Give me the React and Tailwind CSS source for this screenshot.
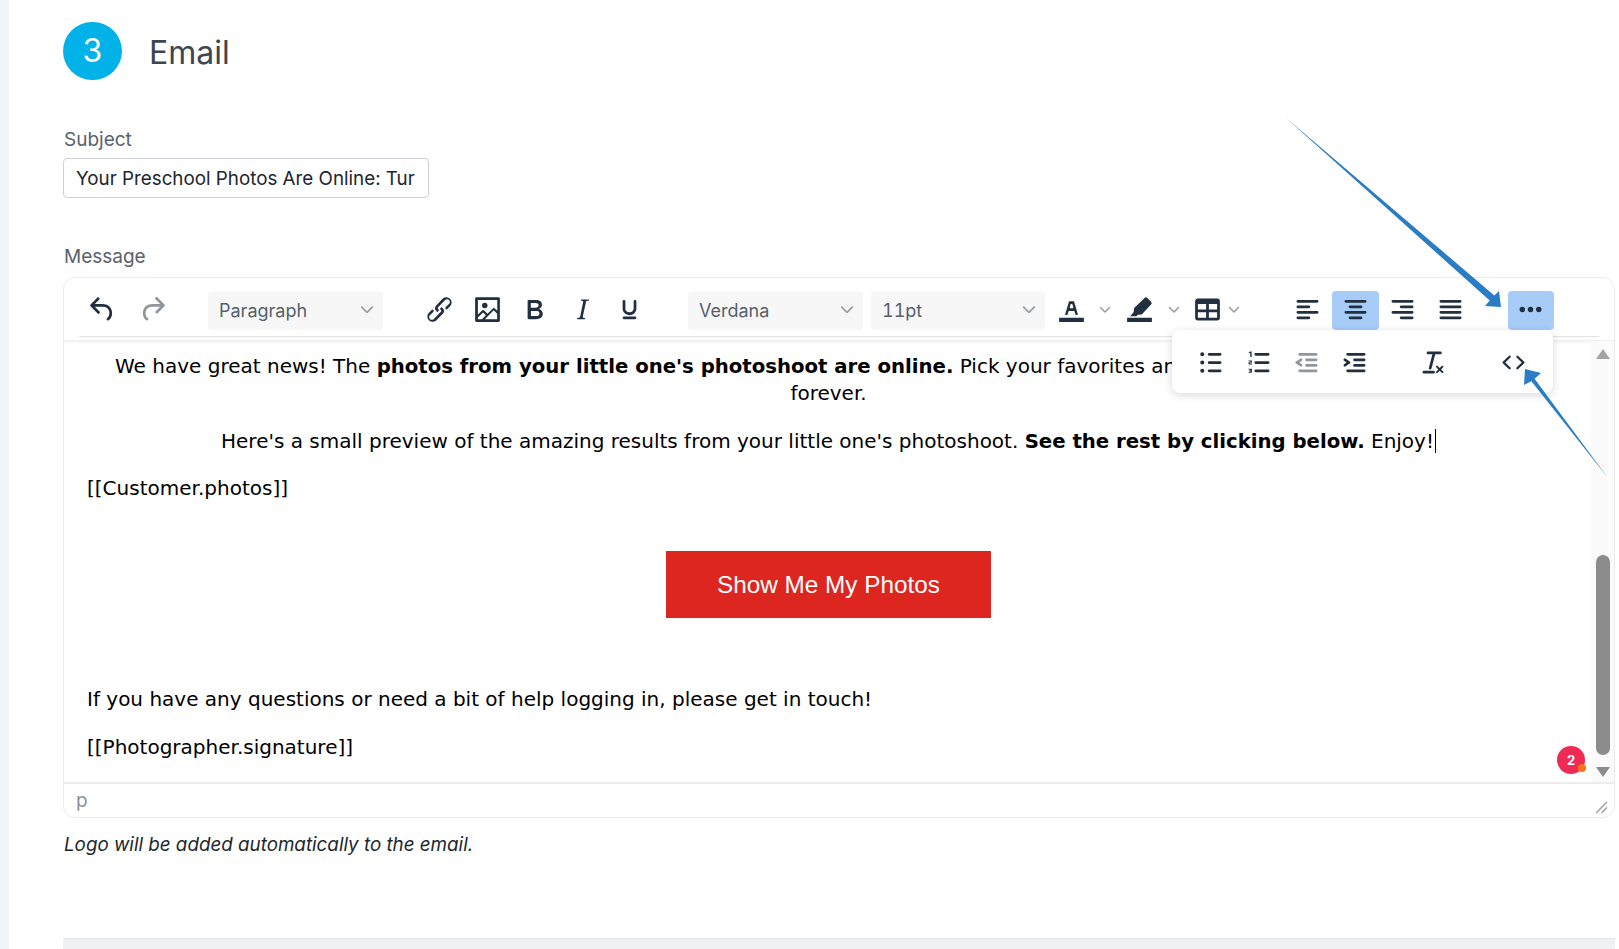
const ink = '#222f3e'

const icons = {
  undo: 'M6.4 8H12c3.7 0 6.2 2 6.8 5.1.6 2.7-.4 5.6-2.3 6.8a1 1 0 0 1-1-1.8c1.1-.6 1.8-2.7 1.4-4.6-.5-2.1-2.1-3.5-4.9-3.5H6.4l3.3 3.3a1 1 0 1 1-1.4 1.4l-5-5a1 1 0 0 1 0-1.4l5-5a1 1 0 0 1 1.4 1.4L6.4 8Z',
  redo: 'M17.6 10H12c-2.8 0-4.4 1.4-4.9 3.5-.4 2 .3 4 1.4 4.6a1 1 0 1 1-1 1.8c-2-1.2-2.9-4.1-2.3-6.8.6-3 3-5.1 6.8-5.1h5.6l-3.3-3.3a1 1 0 1 1 1.4-1.4l5 5a1 1 0 0 1 0 1.4l-5 5a1 1 0 0 1-1.4-1.4l3.3-3.3Z',
  link: 'M6.2 12.3a1 1 0 0 1 1.4 1.4l-2 2a2 2 0 1 0 2.6 2.8l4.8-4.8a1 1 0 0 0 0-1.4 1 1 0 1 1 1.4-1.3 2.9 2.9 0 0 1 0 4L9.6 20a3.9 3.9 0 0 1-5.5-5.5l2-2Zm11.6-.6a1 1 0 0 1-1.4-1.4l2-2a2 2 0 1 0-2.6-2.8L11 10.3a1 1 0 0 0 0 1.4A1 1 0 1 1 9.6 13a2.9 2.9 0 0 1 0-4L14.4 4a3.9 3.9 0 0 1 5.5 5.5l-2 2Z',
  image: 'm5 15.7 3.3-3.2c.3-.3.7-.3 1 0L12 15l4.1-4c.3-.4.8-.4 1 0l2 1.9V5H5v10.7ZM5 18V19h3l2.8-2.9-2-2L5 17.9Zm14-3-2.5-2.4-6.4 6.5H19v-4ZM4 3h16c.6 0 1 .4 1 1v16c0 .6-.4 1-1 1H4a1 1 0 0 1-1-1V4c0-.6.4-1 1-1Zm6 8a2 2 0 1 0 0-4 2 2 0 0 0 0 4Z',
  bold: 'M7.8 19c-.3 0-.5 0-.6-.2l-.2-.5V5.7c0-.2 0-.4.2-.5l.6-.2h5c1.5 0 2.7.3 3.5 1 .7.6 1.1 1.4 1.1 2.5a3 3 0 0 1-.6 1.9c-.4.6-1 1-1.6 1.2.4.1.9.3 1.3.6s.8.7 1 1.2c.4.4.5 1 .5 1.6 0 1.3-.4 2.3-1.3 3-.8.7-2.1 1-3.8 1H7.8Zm5-8.3c.6 0 1.2-.1 1.6-.5.4-.3.6-.7.6-1.3 0-1.1-.8-1.7-2.3-1.7H9.3v3.5h3.4Zm.5 6c.7 0 1.3-.1 1.7-.4.4-.4.6-.9.6-1.5s-.2-1-.7-1.4c-.4-.3-1-.4-2-.4H9.4v3.8h4Z',
  italic: 'm16.7 4.7-.1.9h-.3c-.6 0-1 0-1.4.3-.3.3-.4.6-.5 1.1l-2.1 9.8v.6c0 .5.4.8 1.4.8h.2l-.2.8H8l.2-.8h.2c1.1 0 1.8-.5 2-1.5l2-9.8.1-.5c0-.6-.4-.8-1.4-.8h-.3l.2-.9h5.8Z',
  underline: 'M16 5c.6 0 1 .4 1 1v5.5a4 4 0 0 1-.4 1.8l-1 1.4a5.3 5.3 0 0 1-5.5 1 5 5 0 0 1-1.6-1c-.5-.4-.8-.9-1.1-1.4a4 4 0 0 1-.4-1.8V6c0-.6.4-1 1-1s1 .4 1 1v5.5c0 .3 0 .6.2 1l.6.7a3.3 3.3 0 0 0 2.2.8 3.4 3.4 0 0 0 2.2-.8c.3-.2.4-.5.6-.8l.2-.9V6c0-.6.4-1 1-1ZM8 17h8c.6 0 1 .4 1 1s-.4 1-1 1H8a1 1 0 0 1 0-2Z',
  textColor: 'M3 18h18v3H3zM8.7 16h-.8a.5.5 0 0 1-.5-.6l2.7-9c.1-.3.3-.4.5-.4h2.8c.2 0 .4.1.5.4l2.7 9a.5.5 0 0 1-.5.6h-.8a.5.5 0 0 1-.4-.4l-.7-2.2c0-.3-.3-.4-.5-.4h-3.4c-.2 0-.4.1-.5.4l-.7 2.2c0 .3-.2.4-.4.4Zm2.6-7.6-.6 2a.5.5 0 0 0 .5.6h1.6a.5.5 0 0 0 .5-.6l-.6-2c0-.3-.3-.4-.5-.4h-.4c-.2 0-.4.1-.5.4Z',
  highlight: 'M3 18h18v3H3zM15.7 3.6a1.4 1.4 0 0 1 2 0l2.7 2.7a1.4 1.4 0 0 1 0 2l-6.6 7.1c-.2.2-.4.3-.7.3l-2.3.2-1 1H5.2l2.6-3 .2-2.4c0-.3.1-.5.3-.7l7.4-7.2Z',
  table: 'M19 4a2 2 0 0 1 2 2v12a2 2 0 0 1-2 2H5a2 2 0 0 1-2-2V6c0-1.1.9-2 2-2h14ZM5 14v4h6v-4H5Zm14 0h-6v4h6v-4Zm0-6h-6v4h6V8ZM5 12h6V8H5v4Z',
  alignLeft: 'M5 5h14c.6 0 1 .4 1 1s-.4 1-1 1H5a1 1 0 1 1 0-2Zm0 4h8c.6 0 1 .4 1 1s-.4 1-1 1H5a1 1 0 1 1 0-2Zm0 8h8c.6 0 1 .4 1 1s-.4 1-1 1H5a1 1 0 0 1 0-2Zm0-4h14c.6 0 1 .4 1 1s-.4 1-1 1H5a1 1 0 0 1 0-2Z',
  alignCenter: 'M5 5h14c.6 0 1 .4 1 1s-.4 1-1 1H5a1 1 0 1 1 0-2Zm3 4h8c.6 0 1 .4 1 1s-.4 1-1 1H8a1 1 0 1 1 0-2Zm0 8h8c.6 0 1 .4 1 1s-.4 1-1 1H8a1 1 0 0 1 0-2Zm-3-4h14c.6 0 1 .4 1 1s-.4 1-1 1H5a1 1 0 0 1 0-2Z',
  alignRight: 'M5 5h14c.6 0 1 .4 1 1s-.4 1-1 1H5a1 1 0 1 1 0-2Zm6 4h8c.6 0 1 .4 1 1s-.4 1-1 1h-8a1 1 0 0 1 0-2Zm0 8h8c.6 0 1 .4 1 1s-.4 1-1 1h-8a1 1 0 0 1 0-2Zm-6-4h14c.6 0 1 .4 1 1s-.4 1-1 1H5a1 1 0 0 1 0-2Z',
  justify: 'M5 5h14c.6 0 1 .4 1 1s-.4 1-1 1H5a1 1 0 1 1 0-2Zm0 4h14c.6 0 1 .4 1 1s-.4 1-1 1H5a1 1 0 1 1 0-2Zm0 4h14c.6 0 1 .4 1 1s-.4 1-1 1H5a1 1 0 0 1 0-2Zm0 4h14a1 1 0 0 1 0 2H5a1 1 0 0 1 0-2Z',
  more: 'M6 10a2 2 0 0 0-2 2c0 1.1.9 2 2 2a2 2 0 0 0 2-2 2 2 0 0 0-2-2Zm12 0a2 2 0 0 0-2 2c0 1.1.9 2 2 2a2 2 0 0 0 2-2 2 2 0 0 0-2-2Zm-6 0a2 2 0 0 0-2 2c0 1.1.9 2 2 2a2 2 0 0 0 2-2 2 2 0 0 0-2-2Z',
  bullets: 'M11 5h8c.6 0 1 .4 1 1s-.4 1-1 1h-8a1 1 0 0 1 0-2Zm0 6h8c.6 0 1 .4 1 1s-.4 1-1 1h-8a1 1 0 0 1 0-2Zm0 6h8c.6 0 1 .4 1 1s-.4 1-1 1h-8a1 1 0 0 1 0-2ZM6 4.5a1.5 1.5 0 1 1 0 3 1.5 1.5 0 0 1 0-3Zm0 6a1.5 1.5 0 1 1 0 3 1.5 1.5 0 0 1 0-3Zm0 6a1.5 1.5 0 1 1 0 3 1.5 1.5 0 0 1 0-3Z',
  numbers: 'M10 5h9c.6 0 1 .4 1 1s-.4 1-1 1h-9a1 1 0 0 1 0-2Zm0 6h9c.6 0 1 .4 1 1s-.4 1-1 1h-9a1 1 0 0 1 0-2Zm0 6h9c.6 0 1 .4 1 1s-.4 1-1 1h-9a1 1 0 0 1 0-2ZM6 4h1v4H6V5H5V4.500ZM4.800 10.500h2.400v1.700H5.800v.5h1.400v.8H4.800v-1.700h1.400v-.5H4.800Zm0 6h2.400v3H4.800v-.8h1.400v-.3H5.300v-.8h.9v-.3H4.800Z',
  outdent: 'M7 5h12c.6 0 1 .4 1 1s-.4 1-1 1H7a1 1 0 1 1 0-2Zm5 4h7c.6 0 1 .4 1 1s-.4 1-1 1h-7a1 1 0 0 1 0-2Zm0 4h7c.6 0 1 .4 1 1s-.4 1-1 1h-7a1 1 0 0 1 0-2Zm-5 4h12a1 1 0 0 1 0 2H7a1 1 0 0 1 0-2Zm1.600-3.800a1 1 0 0 1-1.200 1.600l-3-2a1 1 0 0 1 0-1.600l3-2a1 1 0 0 1 1.200 1.600L6.800 12l1.800 1.200Z',
  indent: 'M7 5h12c.6 0 1 .4 1 1s-.4 1-1 1H7a1 1 0 1 1 0-2Zm5 4h7c.6 0 1 .4 1 1s-.4 1-1 1h-7a1 1 0 0 1 0-2Zm0 4h7c.6 0 1 .4 1 1s-.4 1-1 1h-7a1 1 0 0 1 0-2Zm-5 4h12a1 1 0 0 1 0 2H7a1 1 0 0 1 0-2Zm-2.600-3.800L6.200 12l-1.800-1.200a1 1 0 0 1 1.200-1.600l3 2a1 1 0 0 1 0 1.600l-3 2a1 1 0 1 1-1.200-1.600Z',
  clear: 'M13.200 6a1 1 0 0 1 0 .2l-2.600 10a1 1 0 0 1-1 .8h-.2a.8.8 0 0 1-.8-1l2.600-10H8a1 1 0 1 1 0-2h9a1 1 0 0 1 0 2h-3.800ZM5 18h7a1 1 0 0 1 0 2H5a1 1 0 0 1 0-2Zm13 1.500L16.500 18 15 19.500a.7.7 0 0 1-1-1l1.500-1.500-1.500-1.500a.7.7 0 0 1 1-1l1.500 1.500 1.500-1.500a.7.7 0 0 1 1 1L17.500 17l1.500 1.500a.7.7 0 0 1-1 1Z',
  code: 'M9.800 15.700c.3.3.3.8 0 1-.3.4-.9.4-1.200 0l-4.400-4.100a.8.8 0 0 1 0-1.200l4.400-4.200c.3-.3.9-.3 1.200 0 .3.3.3.8 0 1.100L6 12l3.800 3.700ZM14.200 15.700c-.3.3-.3.8 0 1 .3.4.9.4 1.200 0l4.400-4.100c.3-.3.3-.9 0-1.200l-4.400-4.200a.8.8 0 0 0-1.200 0c-.3.3-.3.8 0 1.100L18 12l-3.800 3.700Z',
}

function Icon({ name, color = ink, faded }) {
  return (
    <svg viewBox="0 0 24 24" className="h-[33px] w-[33px] -translate-y-[1px]" fill={color} opacity={faded ? 0.5 : 1}>
      <path d={icons[name]} />
    </svg>
  )
}

function Chevron({ className = 'h-[12px] w-[12px]' }) {
  return (
    <svg viewBox="0 0 12 12" className={className} fill="none" stroke="#9aa0a8" strokeWidth="1.6" strokeLinecap="round" strokeLinejoin="round">
      <path d="M1.500 3.500 6 8l4.500-4.500" />
    </svg>
  )
}

function ToolButton({ name, width = 'w-[47.500px]', active, faded, className = '' }) {
  return (
    <div className={`flex h-[39px] shrink-0 items-center justify-center rounded-[4px] ${width} ${active ? 'bg-[#a6ccf7]' : ''} ${className}`}>
      <Icon name={name} faded={faded} />
    </div>
  )
}

function SelectBox({ label, width, className = '' }) {
  return (
    <div className={`flex h-[39px] shrink-0 items-center justify-between rounded-[4px] bg-[#f7f7f7] pl-[11px] pr-[9px] text-[18px] text-[#555f6b] ${width} ${className}`}>
      <span>{label}</span>
      <Chevron className="h-[14px] w-[14px]" />
    </div>
  )
}

function Toolbar() {
  return (
    <div className="flex h-[62px] shrink-0 flex-col px-[15px]">
      <div className="flex h-[58px] items-center pt-[6px]">
        <ToolButton name="undo" width="w-[47px]" />
        <ToolButton name="redo" width="w-[47px]" className="ml-[3px]" faded />
        <SelectBox label="Paragraph" width="w-[175px]" className="ml-[32px]" />
        <div className="ml-[33px] flex">
          <ToolButton name="link" />
          <ToolButton name="image" />
          <ToolButton name="bold" />
          <ToolButton name="italic" />
          <ToolButton name="underline" />
        </div>
        <SelectBox label="Verdana" width="w-[175px]" className="ml-[34.500px]" />
        <SelectBox label="11pt" width="w-[174px]" className="ml-[8px] tabular-nums" />
        <ToolButton name="textColor" width="w-[42px]" className="ml-[5px]" />
        <div className="flex w-[25px] justify-center"><Chevron /></div>
        <ToolButton name="highlight" width="w-[42px]" className="ml-[1px]" />
        <div className="ml-[1px] flex w-[25px] justify-center"><Chevron /></div>
        <ToolButton name="table" width="w-[42px]" />
        <div className="flex w-[12px] justify-center"><Chevron /></div>
        <div className="ml-[44px] flex">
          <ToolButton name="alignLeft" />
          <ToolButton name="alignCenter" active />
          <ToolButton name="alignRight" />
          <ToolButton name="justify" />
        </div>
        <ToolButton name="more" width="w-[46px]" active className="ml-[33.500px]" />
      </div>
      <div className="h-[1px] bg-[#e3e3e3]" />
    </div>
  )
}

function Drawer() {
  return (
    <div className="absolute left-[1108px] top-[52px] z-10 flex h-[63px] w-[381px] items-center rounded-[8px] bg-white pl-[14px] pt-[3px] shadow-[0_2px_8px_rgba(34,47,62,0.18)]">
      <ToolButton name="bullets" width="w-[48px]" />
      <ToolButton name="numbers" width="w-[48px]" />
      <ToolButton name="outdent" width="w-[48px]" faded />
      <ToolButton name="indent" width="w-[48px]" />
      <ToolButton name="clear" width="w-[48px]" className="ml-[31px]" />
      <ToolButton name="code" width="w-[48px]" className="ml-[32px]" />
    </div>
  )
}

function ScrollTrack() {
  return (
    <div className="flex w-[23px] shrink-0 flex-col items-center bg-[#fbfbfb]">
      <div className="mt-[8px] h-0 w-0 border-x-[7px] border-b-[10px] border-x-transparent border-b-[#a3a3a3]" />
      <div className="mt-[196px] h-[200px] w-[14px] rounded-[7px] bg-[#8c8c8c]" />
      <div className="mt-[12px] h-0 w-0 border-x-[7px] border-t-[10px] border-x-transparent border-t-[#8c8c8c]" />
    </div>
  )
}

function EditorBody() {
  return (
    <div className="relative min-w-0 flex-1 overflow-hidden pl-[23px] pr-[21px] pt-[12px] font-['DejaVu_Sans','Liberation_Sans',sans-serif] text-[20px] leading-[27px] text-black">
      <p className="text-center">
        We have great news! The <b className="text-[19.700px]">photos from your little one's photoshoot are online.</b> Pick your favorites and keep all these wonderful moments
        <br />
        forever.
      </p>
      <p className="mt-[17px] text-center">
        Here's a small preview of the amazing results from your little one's photoshoot. <b className="text-[19.700px]">See the rest by clicking below.</b> Enjoy!
        <span className="ml-[1px] inline-block h-[24px] w-[1px] translate-y-[5px] bg-black" />
      </p>
      <p className="mt-[20px]">[[Customer.photos]]</p>
      <div className="mt-[49px] flex justify-center">
        <div className="flex h-[67px] w-[325px] items-center justify-center bg-[#dd2620] font-['Liberation_Sans',sans-serif] text-[24.300px] text-white">
          Show Me My Photos
        </div>
      </div>
      <p className="mt-[68px]">If you have any questions or need a bit of help logging in, please get in touch!</p>
      <p className="mt-[21px]">[[Photographer.signature]]</p>
      <div className="absolute right-[6px] top-[405px] flex h-[28px] w-[28px] items-center justify-center rounded-full bg-[#ee2a55] font-['Inter',sans-serif] text-[13px] font-bold text-white">
        2
        <span className="absolute bottom-[2px] right-[-1px] h-[8px] w-[8px] rounded-full bg-[#f97316]" />
      </div>
    </div>
  )
}

function StatusBar() {
  return (
    <div className="relative flex h-[35px] shrink-0 items-center border-t-2 border-[#ececec] px-[12px] pt-[2px] text-[19px] text-[#8a929b]">
      p
      <svg viewBox="0 0 12 12" className="absolute bottom-[3px] right-[6px] h-[13px] w-[13px]" fill="none" stroke="#9a9a9a" strokeWidth="1.200">
        <path d="M11 1 1 11M11 6l-5 5" />
      </svg>
    </div>
  )
}

// the two blue callout arrows lie over the whole page
function Arrows() {
  return (
    <svg className="pointer-events-none absolute left-0 top-0 z-20 h-[949px] w-[1619px]" viewBox="0 0 1619 949" fill="#2a7dc4">
      <path d="M1285 117 1494.300 295.400 1499 291 1501 307 1485 306 1489.700 300.600Z" />
      <path d="M1608 478 1534.600 378.800 1541 373 1525 369 1524 385 1531.400 381.200Z" />
    </svg>
  )
}

export default function App() {
  return (
    <main className="relative flex h-[949px] overflow-hidden bg-white font-['Inter',sans-serif]">
      <div className="w-[9px] shrink-0 bg-[#f3f4f6]" />
      <section className="ml-[54px] flex w-[1552px] flex-col">
        <header className="mt-[22px] flex shrink-0 items-center">
          <div className="flex h-[58px] w-[59px] items-center justify-center rounded-full bg-[#00b2e8] text-[32px] text-white">3</div>
          <h1 className="ml-[27px] translate-y-[2px] text-[32px] font-normal text-[#3d4651]">Email</h1>
        </header>

        <label className="mt-[48px] pl-[1px] text-[19px] leading-[24px] text-[#59626d]">Subject</label>
        <input
          readOnly
          value="Your Preschool Photos Are Online: Tur"
          className="mt-[6px] h-[40px] w-[366px] shrink-0 rounded-[4px] border border-[#cfd2d6] px-[12px] text-[18.800px] text-[#20262d] outline-none"
        />

        <label className="mt-[47px] pl-[1px] text-[19px] leading-[24px] text-[#59626d]">Message</label>
        <div className="relative mt-[8px] flex h-[541px] shrink-0 flex-col rounded-[12px] border border-[#ececec]">
          <Toolbar />
          <div className="flex min-h-0 flex-1 border-t border-[#f0f0f0] shadow-[inset_0_3px_3px_-2px_rgba(34,47,62,0.08)]">
            <EditorBody />
            <ScrollTrack />
          </div>
          <StatusBar />
          <Drawer />
        </div>

        <p className="mt-[15px] pl-[1px] text-[18.800px] italic leading-[24px] text-[#20262d]">Logo will be added automatically to the email.</p>
        <div className="mt-[81px] h-[20px] shrink-0 border-t border-[#e3e4e6] bg-[#f0f1f3]" />
      </section>
      <Arrows />
    </main>
  )
}
